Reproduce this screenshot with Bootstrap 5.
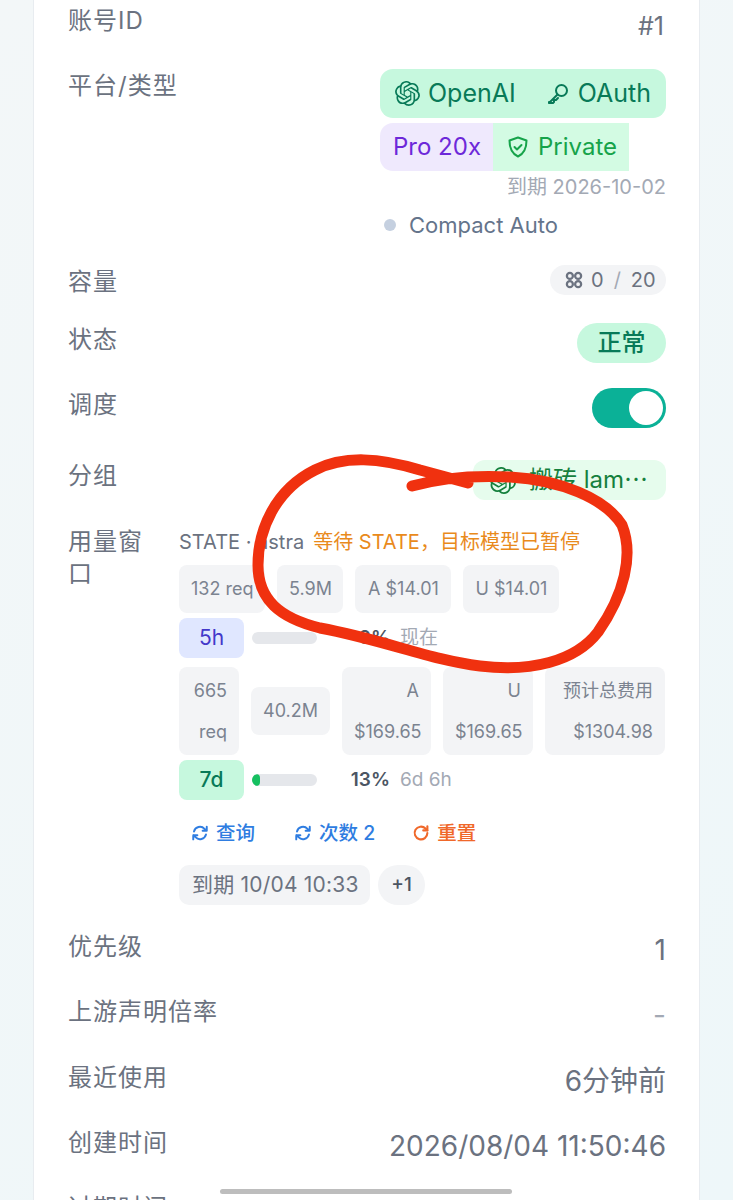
<!DOCTYPE html>
<html lang="zh-CN">
<head>
    <meta charset="UTF-8" />
    <title>账号详情</title>
    <meta name="viewport" content="width=device-width, initial-scale=1" />
    <link href="https://cdn.jsdelivr.net/npm/bootstrap@5.3.0/dist/css/bootstrap.min.css" rel="stylesheet" />
    <style>
        html, body { height: 1200px; overflow: hidden; }
        body {
            background: linear-gradient(135deg, #f3f7f8 0%, #eef7f9 100%);
            color: #6b7280;
            font-family: "Inter", "Noto Sans CJK SC", sans-serif;
            position: relative;
        }
        .sheet {
            background: #fff;
            margin: 0 33px 0 33px;
            height: 1300px;
            border-left: 1px solid #e8ecf0;
            border-right: 1px solid #e8ecf0;
            padding: 6px 33px 0 34px;
        }
        .info-row { display: flex; justify-content: space-between; align-items: flex-start; }
        .info-label { font-size: 24px; letter-spacing: 1px; line-height: 30px; color: #6b7280; flex-shrink: 0; }
        .info-value { font-size: 24px; line-height: 30px; color: #6b7280; }
        .info-id { font-size: 25px; margin-top: 5px; margin-right: 2px; }
        .info-big { font-size: 28px; line-height: 36px; }
        .info-faint { color: #a3a9b4; }

        /* 每行的间距 */
        .gap-id { margin-bottom: 28px; }
        .gap-plat { margin-bottom: 25px; }
        .gap-cap { margin-bottom: 26px; }
        .gap-state { margin-bottom: 25px; }
        .gap-switch { margin-bottom: 32px; }
        .gap-group { margin-bottom: 28px; }
        .gap-usage { margin-bottom: 27px; }
        .gap-meta { margin-bottom: 29.3px; }
        .label-drop-1 { margin-top: 1px; }
        .label-drop-2 { margin-top: 2px; }

        /* 平台/类型 */
        .plat-stack { display: flex; flex-direction: column; align-items: flex-end; width: 286px; }
        .plat-pill {
            display: flex; align-items: center; width: 286px; height: 49px; padding: 0 12px 0 15px;
            background: #c6f8de; color: #087a58; border-radius: 13px; font-size: 25px; white-space: nowrap;
        }
        .key-icon { margin-left: 30px; margin-right: 8px; }
        .plat-pair { display: flex; align-self: flex-start; height: 48px; margin-top: 5px; font-size: 24px; }
        .plan-part { background: #efe9fd; color: #6d28d9; padding: 0 12px 0 13px; display: flex; align-items: center; border-radius: 13px 0 0 13px; width: 113px; }
        .priv-part { background: #d3fbe3; color: #16a34a; display: flex; align-items: center; padding-left: 13px; width: 136px; }
        .expire-note { font-size: 20px; line-height: 24px; color: #a3a9b4; margin-top: 4px; }
        .compact-line { align-self: flex-start; display: flex; align-items: center; font-size: 22px; line-height: 30px; color: #64748b; margin-top: 11px; margin-left: 4px; }
        .compact-dot { width: 12px; height: 12px; border-radius: 50%; background: #c5d0e0; margin-right: 13px; }

        .cap-pill { display: flex; align-items: center; height: 30px; width: 116px; padding-left: 15px; background: #f3f4f6; border-radius: 15px; font-size: 20px; color: #6b7280; }
        .cap-slash { color: #a3a9b4; margin: 0 10px; }
        .status-pill { background: #c6f8de; color: #087a58; height: 40px; width: 89px; border-radius: 20px; font-size: 24px; display: flex; align-items: center; justify-content: center; font-weight: 500; }
        .switch-track { width: 74px; height: 40px; border-radius: 20px; background: #0bb197; display: flex; align-items: center; justify-content: flex-end; padding-right: 3px; }
        .switch-knob { width: 34px; height: 34px; border-radius: 50%; background: #fff; }
        .group-pill { display: flex; align-items: center; width: 193px; height: 40px; padding-left: 16px; background: #e6fced; color: #15803d; border-radius: 12px; font-size: 24px; white-space: nowrap; }
        .group-icon { margin-right: 13px; flex-shrink: 0; }

        /* 用量窗口 */
        .usage-label { width: 111px; padding-right: 25px; margin-top: -2px; font-size: 24px; letter-spacing: 1px; line-height: 32px; color: #6b7280; flex-shrink: 0; }
        .usage-body { flex: 1; min-width: 0; }
        .state-line { font-size: 20px; line-height: 28px; color: #6b7280; white-space: nowrap; }
        .state-warn { color: #e98a1c; margin-left: 9px; }
        .stat-row { display: flex; align-items: center; gap: 12px; }
        .stat-first { margin-top: 9px; }
        .stat-second { margin-top: 9px; }
        .stat-chip { background: #f3f4f6; color: #7b8390; border-radius: 8px; font-size: 18px; line-height: 48px; padding: 0 12px; white-space: nowrap; text-align: right; }
        .stat-tall { line-height: 41px; padding: 3px 12px; }
        .w-tokens { width: 66px; padding: 0; text-align: center; }
        .w-amount { width: 96px; padding: 0; text-align: center; }
        .w-req { width: 60px; }
        .w-a { width: 89px; }
        .w-u { width: 90px; }
        .w-total { width: 120px; }
        .win-row { display: flex; align-items: center; height: 40px; margin-top: 5px; }
        .win-tag { width: 65px; height: 40px; border-radius: 8px; display: flex; align-items: center; justify-content: center; font-size: 21px; }
        .win-blue { background: #e0e7ff; color: #4338ca; }
        .win-green { background: #c6f8de; color: #087a58; font-weight: 500; }
        .win-bar { width: 65px; height: 12px; border-radius: 6px; background: #e5e7eb; margin-left: 8px; overflow: hidden; }
        .win-fill { height: 100%; background: #16c060; border-radius: 6px; }
        .win-pct { width: 73px; text-align: right; font-size: 19px; font-weight: 600; color: #4b5563; }
        .win-time { margin-left: 10px; font-size: 19px; color: #a3a9b4; }
        .act-row { display: flex; align-items: center; margin-top: 18px; padding-left: 12px; font-size: 19.5px; line-height: 30px; font-weight: 500; }
        .act-item { display: flex; align-items: center; gap: 7px; }
        .act-blue { color: #2f7de1; }
        .act-orange { color: #f0682a; }
        .act-second { margin-left: 39px; }
        .act-third { margin-left: 37px; }
        .tag-row { display: flex; gap: 8px; margin-top: 17px; }
        .tag-time { height: 40px; padding: 0 13px; background: #f3f4f6; color: #6b7280; border-radius: 10px; font-size: 21px; letter-spacing: .2px; display: flex; align-items: center; width: 191px; white-space: nowrap; }
        .tag-more { width: 47px; height: 40px; border-radius: 20px; background: #f3f4f6; color: #4b5563; font-size: 19px; display: flex; align-items: center; justify-content: center; font-weight: 500; }

        .ink-mark { position: absolute; left: 0; top: 0; pointer-events: none; }
        .home-bar { position: absolute; left: 220px; top: 1189px; width: 292px; height: 5px; border-radius: 3px; background: #bdbdbd; }
    </style>
</head>
<body>
    <svg width="0" height="0" class="d-block">
        <symbol id="logo-openai" viewBox="0 0 24 24"><path fill="currentColor" d="M22.2819 9.8211a5.9847 5.9847 0 0 0-.5157-4.9108 6.0462 6.0462 0 0 0-6.5098-2.9A6.0651 6.0651 0 0 0 4.9807 4.1818a5.9847 5.9847 0 0 0-3.9977 2.9 6.0462 6.0462 0 0 0 .7427 7.0966 5.98 5.98 0 0 0 .511 4.9107 6.051 6.051 0 0 0 6.5146 2.9001A5.9847 5.9847 0 0 0 13.2599 24a6.0557 6.0557 0 0 0 5.7718-4.2058 5.9894 5.9894 0 0 0 3.9977-2.9001 6.0557 6.0557 0 0 0-.7475-7.0729zm-9.022 12.6081a4.4755 4.4755 0 0 1-2.8764-1.0408l.1419-.0804 4.7783-2.7582a.7948.7948 0 0 0 .3927-.6813v-6.7369l2.02 1.1686a.071.071 0 0 1 .038.052v5.5826a4.504 4.504 0 0 1-4.4945 4.4944zm-9.6607-4.1254a4.4708 4.4708 0 0 1-.5346-3.0137l.142.0852 4.783 2.7582a.7712.7712 0 0 0 .7806 0l5.8428-3.3685v2.3324a.0804.0804 0 0 1-.0332.0615L9.74 19.9502a4.4992 4.4992 0 0 1-6.1408-1.6464zM2.3408 7.8956a4.485 4.485 0 0 1 2.3655-1.9728V11.6a.7664.7664 0 0 0 .3879.6765l5.8144 3.3543-2.0201 1.1685a.0757.0757 0 0 1-.071 0l-4.8303-2.7865A4.504 4.504 0 0 1 2.3408 7.872zm16.5963 3.8558L13.1038 8.364 15.1192 7.2a.0757.0757 0 0 1 .071 0l4.8303 2.7913a4.4944 4.4944 0 0 1-.6765 8.1042v-5.6772a.79.79 0 0 0-.407-.667zm2.0107-3.0231l-.142-.0852-4.7735-2.7818a.7759.7759 0 0 0-.7854 0L9.409 9.2297V6.8974a.0662.0662 0 0 1 .0284-.0615l4.8303-2.7866a4.4992 4.4992 0 0 1 6.6802 4.66zM8.3065 12.863l-2.02-1.1638a.0804.0804 0 0 1-.038-.0567V6.0742a4.4992 4.4992 0 0 1 7.3757-3.4537l-.142.0805L8.704 5.459a.7948.7948 0 0 0-.3927.6813zm1.0976-2.3654l2.602-1.4998 2.6069 1.4998v2.9994l-2.5974 1.4997-2.6067-1.4997Z"/></symbol>
        <symbol id="icon-sync" viewBox="0 0 24 24"><path fill="none" stroke="currentColor" stroke-width="2.6" stroke-linecap="round" stroke-linejoin="round" d="M4 10a8.2 8.2 0 0 1 14-3.5L21 9m0-5.5V9h-5.5M20 14a8.2 8.2 0 0 1-14 3.5L3 15m0 5.5V15h5.5"/></symbol>
    </svg>

    <div class="sheet">
        <div class="info-row gap-id">
            <div class="info-label">账号ID</div>
            <div class="info-value info-id">#1</div>
        </div>

        <div class="info-row gap-plat">
            <div class="info-label label-drop-2">平台/类型</div>
            <div class="plat-stack">
                <div class="plat-pill">
                    <svg width="25" height="25" class="me-2"><use href="#logo-openai"/></svg>
                    <span>OpenAI</span>
                    <svg width="24" height="24" viewBox="0 0 24 24" fill="none" stroke="currentColor" stroke-width="2" stroke-linecap="round" stroke-linejoin="round" class="key-icon"><circle cx="15.5" cy="8.5" r="5.5"/><path d="M11.5 12.5 3 21v-1l1 1h3l1-1v-2h2l2-2"/></svg>
                    <span>OAuth</span>
                </div>
                <div class="plat-pair">
                    <span class="plan-part">Pro 20x</span>
                    <span class="priv-part">
                        <svg width="24" height="24" viewBox="0 0 24 24" fill="none" stroke="currentColor" stroke-width="2" stroke-linecap="round" stroke-linejoin="round" class="me-2"><path d="M12 2.5l8.5 3c0 8-2 13-8.5 16-6.5-3-8.5-8-8.5-16z"/><path d="m8.5 12 2.5 2.5 4.5-4.5"/></svg>
                        Private
                    </span>
                </div>
                <div class="expire-note">到期 2026-10-02</div>
                <div class="compact-line"><span class="compact-dot"></span>Compact Auto</div>
            </div>
        </div>

        <div class="info-row gap-cap">
            <div class="info-label label-drop-2">容量</div>
            <div class="cap-pill">
                <svg width="18" height="18" viewBox="0 0 24 24" fill="none" stroke="currentColor" stroke-width="3" class="me-2"><rect x="2.5" y="2.5" width="8" height="8" rx="4"/><rect x="13.5" y="2.5" width="8" height="8" rx="4"/><rect x="2.5" y="13.5" width="8" height="8" rx="4"/><rect x="13.5" y="13.5" width="8" height="8" rx="4"/></svg>
                <span>0</span><span class="cap-slash">/</span><span>20</span>
            </div>
        </div>

        <div class="info-row gap-state">
            <div class="info-label label-drop-2">状态</div>
            <div class="status-pill">正常</div>
        </div>

        <div class="info-row gap-switch">
            <div class="info-label label-drop-2">调度</div>
            <div class="switch-track"><span class="switch-knob"></span></div>
        </div>

        <div class="info-row gap-group">
            <div class="info-label label-drop-1">分组</div>
            <div class="group-pill">
                <svg width="27" height="27" class="group-icon"><use href="#logo-openai"/></svg>
                <span>搬砖 lam⋯</span>
            </div>
        </div>

        <div class="info-row gap-usage">
            <div class="usage-label">用量窗口</div>
            <div class="usage-body">
                <div class="state-line">STATE · astra<span class="state-warn">等待 STATE，目标模型已暂停</span></div>
                <div class="stat-row stat-first">
                    <span class="stat-chip">132 req</span>
                    <span class="stat-chip w-tokens">5.9M</span>
                    <span class="stat-chip w-amount">A $14.01</span>
                    <span class="stat-chip w-amount">U $14.01</span>
                </div>
                <div class="win-row">
                    <span class="win-tag win-blue">5h</span>
                    <div class="win-bar"></div>
                    <span class="win-pct">0%</span>
                    <span class="win-time">现在</span>
                </div>
                <div class="stat-row stat-second">
                    <span class="stat-chip stat-tall w-req">665<br>req</span>
                    <span class="stat-chip">40.2M</span>
                    <span class="stat-chip stat-tall w-a">A<br>$169.65</span>
                    <span class="stat-chip stat-tall w-u">U<br>$169.65</span>
                    <span class="stat-chip stat-tall w-total">预计总费用<br>$1304.98</span>
                </div>
                <div class="win-row">
                    <span class="win-tag win-green">7d</span>
                    <div class="win-bar"><div class="win-fill" style="width:13%"></div></div>
                    <span class="win-pct">13%</span>
                    <span class="win-time">6d 6h</span>
                </div>
                <div class="act-row">
                    <span class="act-item act-blue"><svg width="18" height="18"><use href="#icon-sync"/></svg>查询</span>
                    <span class="act-item act-blue act-second"><svg width="18" height="18"><use href="#icon-sync"/></svg>次数 2</span>
                    <span class="act-item act-orange act-third">
                        <svg width="18" height="18" viewBox="0 0 24 24" fill="none" stroke="currentColor" stroke-width="2.8" stroke-linecap="round" stroke-linejoin="round"><path d="M20.5 12a8.5 8.5 0 1 1-2.5-6l2.5 2.5"/><path d="M20.5 3v5.5H15"/></svg>
                        重置
                    </span>
                </div>
                <div class="tag-row">
                    <span class="tag-time">到期 10/04 10:33</span>
                    <span class="tag-more">+1</span>
                </div>
            </div>
        </div>

        <div class="info-row gap-meta">
            <div class="info-label">优先级</div>
            <div class="info-value info-big">1</div>
        </div>
        <div class="info-row gap-meta">
            <div class="info-label">上游声明倍率</div>
            <div class="info-value info-big info-faint">-</div>
        </div>
        <div class="info-row gap-meta">
            <div class="info-label">最近使用</div>
            <div class="info-value info-big">6分钟前</div>
        </div>
        <div class="info-row gap-meta">
            <div class="info-label">创建时间</div>
            <div class="info-value info-big">2026/08/04 11:50:46</div>
        </div>
        <div class="info-row">
            <div class="info-label">过期时间</div>
        </div>
    </div>

    <svg class="ink-mark" width="733" height="1200" viewBox="0 0 733 1200" fill="none">
        <path stroke="#f0310f" stroke-width="11" stroke-linecap="round" stroke-linejoin="round" d="M412 486 C440 478 470 475 510 477 C560 480 605 498 622 525 C634 555 624 595 598 632 C575 662 530 672 480 666 C430 660 385 640 320 628 C280 618 258 600 258 565 C258 530 275 490 315 470 C345 455 380 458 420 470 L468 483"/>
    </svg>
    <div class="home-bar"></div>

    <script src="https://cdn.jsdelivr.net/npm/bootstrap@5.3.0/dist/js/bootstrap.bundle.min.js"></script>
</body>
</html>
